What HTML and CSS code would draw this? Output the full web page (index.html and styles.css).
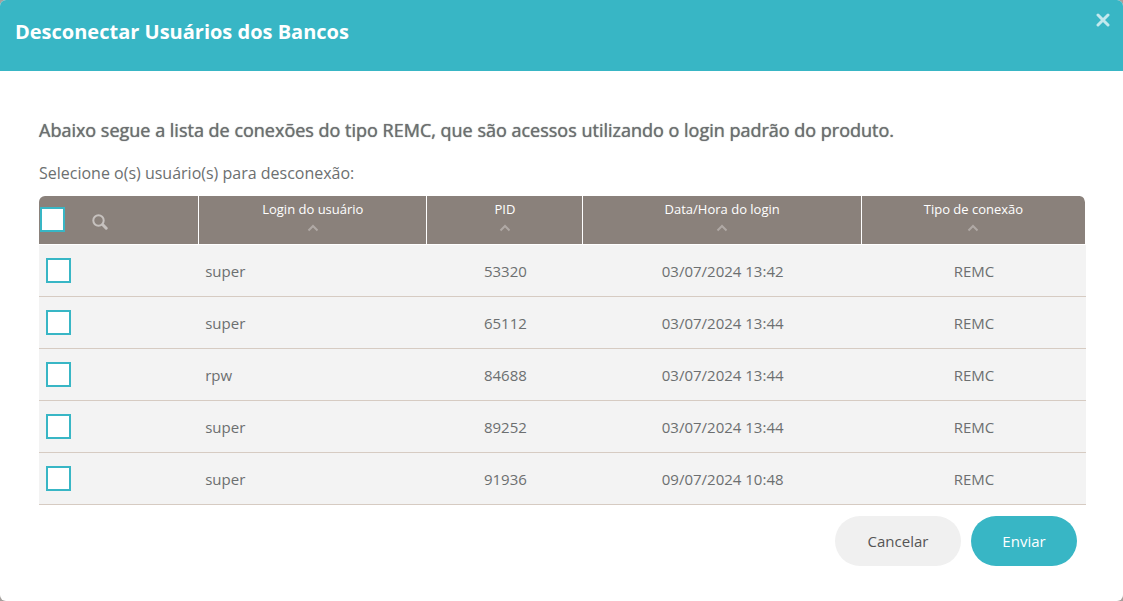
FILE: index.html
```html
<!DOCTYPE html>
<html lang="pt-BR">
<head>
<meta charset="utf-8">
<meta name="viewport" content="width=device-width, initial-scale=1">
<title>Desconectar Usuários dos Bancos</title>
<link rel="stylesheet" href="styles.css">
</head>
<body>
<main class="modal" role="dialog" aria-labelledby="modal-title">
  <header class="modal-header">
    <h1 class="modal-title" id="modal-title">Desconectar Usuários dos Bancos</h1>
    <button class="modal-close" type="button" aria-label="Fechar">
      <svg width="14" height="14" viewBox="0 0 14 14" aria-hidden="true"><path d="M2 2l10 10M12 2L2 12"/></svg>
    </button>
  </header>
  <form class="modal-body">
    <h2 class="lead">Abaixo segue a lista de conexões do tipo REMC, que são acessos utilizando o login padrão do produto.</h2>
    <p class="hint">Selecione o(s) usuário(s) para desconexão:</p>
    <table class="grid">
      <colgroup><col class="col-select"><col class="col-login"><col class="col-pid"><col class="col-date"><col class="col-type"></colgroup>
      <thead>
        <tr>
          <th>
            <div class="tools">
              <input class="check" type="checkbox" aria-label="Selecionar todos">
              <button class="search" type="button" aria-label="Pesquisar">
                <svg width="16" height="16" viewBox="0 0 16 16" aria-hidden="true"><circle cx="6.5" cy="6.5" r="5.2"/><path d="M10.8 10.8l3.4 3.4"/></svg>
              </button>
            </div>
          </th>
          <th><button class="sort" type="button">Login do usuário<svg width="12" height="8" viewBox="0 0 12 8" aria-hidden="true"><path d="M1.500 6.500L6 2l4.500 4.500"/></svg></button></th>
          <th><button class="sort" type="button">PID<svg width="12" height="8" viewBox="0 0 12 8" aria-hidden="true"><path d="M1.500 6.500L6 2l4.500 4.500"/></svg></button></th>
          <th><button class="sort" type="button">Data/Hora do login<svg width="12" height="8" viewBox="0 0 12 8" aria-hidden="true"><path d="M1.500 6.500L6 2l4.500 4.500"/></svg></button></th>
          <th><button class="sort" type="button">Tipo de conexão<svg width="12" height="8" viewBox="0 0 12 8" aria-hidden="true"><path d="M1.500 6.500L6 2l4.500 4.500"/></svg></button></th>
        </tr>
      </thead>
      <tbody>
        <tr><td><input class="check" type="checkbox" aria-label="Selecionar 53320"></td><td class="login">super</td><td>53320</td><td>03/07/2024 13:42</td><td>REMC</td></tr>
        <tr><td><input class="check" type="checkbox" aria-label="Selecionar 65112"></td><td class="login">super</td><td>65112</td><td>03/07/2024 13:44</td><td>REMC</td></tr>
        <tr><td><input class="check" type="checkbox" aria-label="Selecionar 84688"></td><td class="login">rpw</td><td>84688</td><td>03/07/2024 13:44</td><td>REMC</td></tr>
        <tr><td><input class="check" type="checkbox" aria-label="Selecionar 89252"></td><td class="login">super</td><td>89252</td><td>03/07/2024 13:44</td><td>REMC</td></tr>
        <tr><td><input class="check" type="checkbox" aria-label="Selecionar 91936"></td><td class="login">super</td><td>91936</td><td>09/07/2024 10:48</td><td>REMC</td></tr>
      </tbody>
    </table>
    <div class="actions">
      <button class="btn btn-cancel" type="button">Cancelar</button>
      <button class="btn btn-send" type="submit">Enviar</button>
    </div>
  </form>
</main>
</body>
</html>
```
FILE: styles.css
```css
* { box-sizing: border-box; }

body {
  margin: 0;
  background: #a5a09d;
  color: #6c6f70;
  font-family: "Open Sans", "Noto Sans", sans-serif;
}

button {
  padding: 0;
  border: 0;
  background: none;
  color: inherit;
  font: inherit;
  cursor: pointer;
}

svg {
  display: block;
  fill: none;
  stroke: currentColor;
}

.modal {
  min-height: 100vh;
  background: #fff;
  border-radius: 6px;
  overflow: hidden;
}

.modal-header {
  display: flex;
  justify-content: space-between;
  align-items: flex-start;
  padding: 13px 13px 20px 15px;
  background: #38b6c5;
  color: #fff;
}

.modal-title {
  margin: 0;
  padding: 5px 0;
  font-size: 20px;
  font-weight: 700;
  line-height: 28px;
}

.modal-close { color: #c3e9ee; }
.modal-close path { stroke-width: 3; stroke-linecap: round; }

.modal-body { padding: 46px 37px 35px 39px; }

.lead {
  margin: 0;
  font-size: 18px;
  font-weight: 500;
  line-height: 26px;
  text-shadow: 0 0 1px currentColor;
}

.hint {
  margin: 16px 0 9px;
  font-size: 16px;
  line-height: 28px;
}

.grid {
  width: 100%;
  table-layout: fixed;
  border-collapse: separate;
  border-spacing: 0;
}

.col-select { width: 15.3%; }
.col-login { width: 21.8%; }
.col-pid { width: 14.9%; }
.col-date { width: 26.6%; }
.col-type { width: 21.4%; }

.grid th {
  height: 49px;
  padding: 0;
  border-right: 1px solid #fff;
  border-bottom: 1px solid #fff;
  background: #8a817b;
  background-clip: padding-box;
  color: #fff;
  font-size: 13px;
  font-weight: 400;
  vertical-align: top;
}

.grid th:first-child { border-top-left-radius: 6px; }
.grid th:last-child { border-top-right-radius: 6px; }

.tools {
  display: flex;
  align-items: center;
  gap: 27px;
  padding: 11px 0 0 1px;
}

.search { padding-top: 5px; color: #c6c1be; }
.search svg { stroke-width: 2; }
.search path { stroke-width: 3; stroke-linecap: round; }

.sort {
  display: flex;
  flex-direction: column;
  align-items: center;
  gap: 6px;
  width: 100%;
  padding-top: 4px;
  line-height: 18px;
}

.sort svg { color: #b0a9a5; stroke-width: 2; }

.grid td {
  height: 52px;
  padding: 0;
  border-bottom: 1px solid #d6cbc2;
  background: #f3f3f3;
  font-size: 15px;
  text-align: center;
}

.grid td:first-child { padding-left: 7px; text-align: left; }
.grid td.login { padding-left: 6px; text-align: left; }

.check {
  appearance: none;
  display: block;
  width: 25px;
  height: 25px;
  margin: 0;
  border: 2px solid #38b6c5;
  background: #fff;
}

.check:checked { box-shadow: inset 0 0 0 4px #fff; background: #38b6c5; }

.actions {
  display: flex;
  justify-content: flex-end;
  gap: 10px;
  padding: 11px 9px 0 0;
}

.btn {
  height: 50px;
  border-radius: 25px;
  font-size: 15px;
}

.btn-cancel { width: 126px; background: #f0f0f0; color: #555; }
.btn-send { width: 106px; background: #38b6c5; color: #fff; }
```
